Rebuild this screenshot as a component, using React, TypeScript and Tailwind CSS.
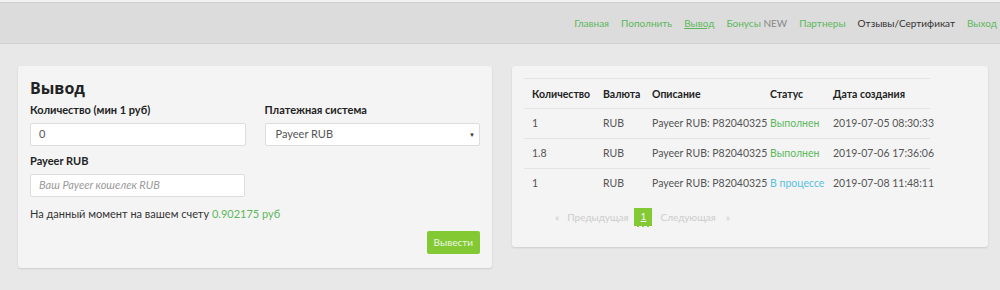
import React from "react";

const rows = [
  { qty: "1", cur: "RUB", desc: "Payeer RUB: P82040325", status: "Выполнен", done: true, date: "2019-07-05 08:30:33" },
  { qty: "1.8", cur: "RUB", desc: "Payeer RUB: P82040325", status: "Выполнен", done: true, date: "2019-07-06 17:36:06" },
  { qty: "1", cur: "RUB", desc: "Payeer RUB: P82040325", status: "В процессе", done: false, date: "2019-07-08 11:48:11" },
];

export default function App() {
  return (
    <div className="w-[1000px] h-[290px] bg-[#e8e8e8] text-[#333] overflow-hidden" style={{ fontFamily: 'Lato, "Open Sans", sans-serif' }}>
      {/* header */}
      <div className="h-[2px] bg-[#f2f2f2]" />
      <div className="h-[42px] bg-[#dcdcdc] border-t border-b border-[#cfcfcf] flex items-center justify-end pr-[3px]">
        <nav className="flex items-center gap-[12px] text-[10px] text-[#5cb85c] whitespace-nowrap">
          <span>Главная</span>
          <span>Пополнить</span>
          <span className="underline">Вывод</span>
          <span>
            Бонусы <span className="text-[#888]">NEW</span>
          </span>
          <span>Партнеры</span>
          <span className="text-[#333]">Отзывы/Сертификат</span>
          <span>Выход</span>
        </nav>
      </div>

      <div className="flex gap-[20px] pl-[18px] pt-[22px] items-start">
        {/* left panel */}
        <div className="w-[474px] shrink-0 bg-[#f4f4f4] rounded-[3px] shadow-[0_1px_2px_rgba(0,0,0,0.12)] px-[12px] pt-[12px] pb-[14px]">
          <h2 className="text-[16px] font-bold text-[#222] leading-[20px]" style={{ fontFamily: '"Open Sans", sans-serif' }}>Вывод</h2>
          <div className="grid grid-cols-2 gap-x-[19px] mt-[5px]">
            <div>
              <div className="text-[11px] font-bold text-[#222] leading-[14px]">Количество (мин 1 руб)</div>
              <div className="mt-[6px] h-[23px] bg-white border border-[#ddd] rounded-[2px] flex items-center px-[8px] text-[11px] text-[#555]">0</div>
            </div>
            <div>
              <div className="text-[11px] font-bold text-[#222] leading-[14px]">Платежная система</div>
              <div className="mt-[6px] h-[23px] bg-white border border-[#ddd] rounded-[2px] flex items-center justify-between pl-[10px] pr-[4px] text-[11px] text-[#555]">
                <span>Payeer RUB</span>
                <span className="text-[6px] text-[#333]">▼</span>
              </div>
            </div>
          </div>
          <div className="w-[215px] mt-[8px]">
            <div className="text-[11px] font-bold text-[#222] leading-[14px]">Payeer RUB</div>
            <div className="mt-[6px] h-[23px] bg-white border border-[#ddd] rounded-[2px] flex items-center px-[8px] text-[11px] italic text-[#999]">Ваш Payeer кошелек RUB</div>
          </div>
          <div className="mt-[10px] text-[11px] text-[#333] leading-[14px]">
            На данный момент на вашем счету <span className="text-[#5cb85c]">0.902175 руб</span>
          </div>
          <div className="flex justify-end mt-[10px]">
            <button className="h-[23px] px-[7px] bg-[#82c934] rounded-[2px] text-[10px] text-[#eef8e0]">Вывести</button>
          </div>
        </div>

        {/* right panel */}
        <div className="w-[476px] shrink-0 bg-[#f4f4f4] rounded-[3px] shadow-[0_1px_2px_rgba(0,0,0,0.12)] px-[12px] pt-[12px] pb-[20px]">
          <table className="w-[406px] table-fixed text-[10.5px] border-t border-[#e3e3e3] whitespace-nowrap">
            <colgroup>
              <col className="w-[71px]" />
              <col className="w-[49px]" />
              <col className="w-[118px]" />
              <col className="w-[63px]" />
              <col />
            </colgroup>
            <thead>
              <tr className="border-b border-[#e3e3e3] text-[#222]">
                <th className="text-left font-bold h-[30px] pl-[8px] pt-[2px]">Количество</th>
                <th className="text-left font-bold pl-[8px] pt-[2px]">Валюта</th>
                <th className="text-left font-bold pl-[8px] pt-[2px]">Описание</th>
                <th className="text-left font-bold pl-[8px] pt-[2px]">Статус</th>
                <th className="text-left font-bold pl-[8px] pt-[2px]">Дата создания</th>
              </tr>
            </thead>
            <tbody className="text-[#555]">
              {rows.map((r, i) => (
                <tr key={i} className={i < rows.length - 1 ? "border-b border-[#e3e3e3]" : ""}>
                  <td className="h-[30px] pl-[8px]">{r.qty}</td>
                  <td className="pl-[8px]">{r.cur}</td>
                  <td className="pl-[8px]">{r.desc}</td>
                  <td className={"pl-[8px] " + (r.done ? "text-[#5cb85c]" : "text-[#5bc0de]")}>{r.status}</td>
                  <td className="pl-[8px]">{r.date}</td>
                </tr>
              ))}
            </tbody>
          </table>
          <div className="flex items-center mt-[9px] pl-[27px] text-[10px] text-[#ccc]">
            <span className="px-[4px]">«</span>
            <span className="px-[4px]">Предыдущая</span>
            <span className="mx-[2px] w-[18px] h-[19px] bg-[#82c934] text-[#f4f4f4] flex items-center justify-center border-b border-dashed border-white underline">1</span>
            <span className="px-[6px]">Следующая</span>
            <span className="px-[4px]">»</span>
          </div>
        </div>
      </div>
    </div>
  );
}
